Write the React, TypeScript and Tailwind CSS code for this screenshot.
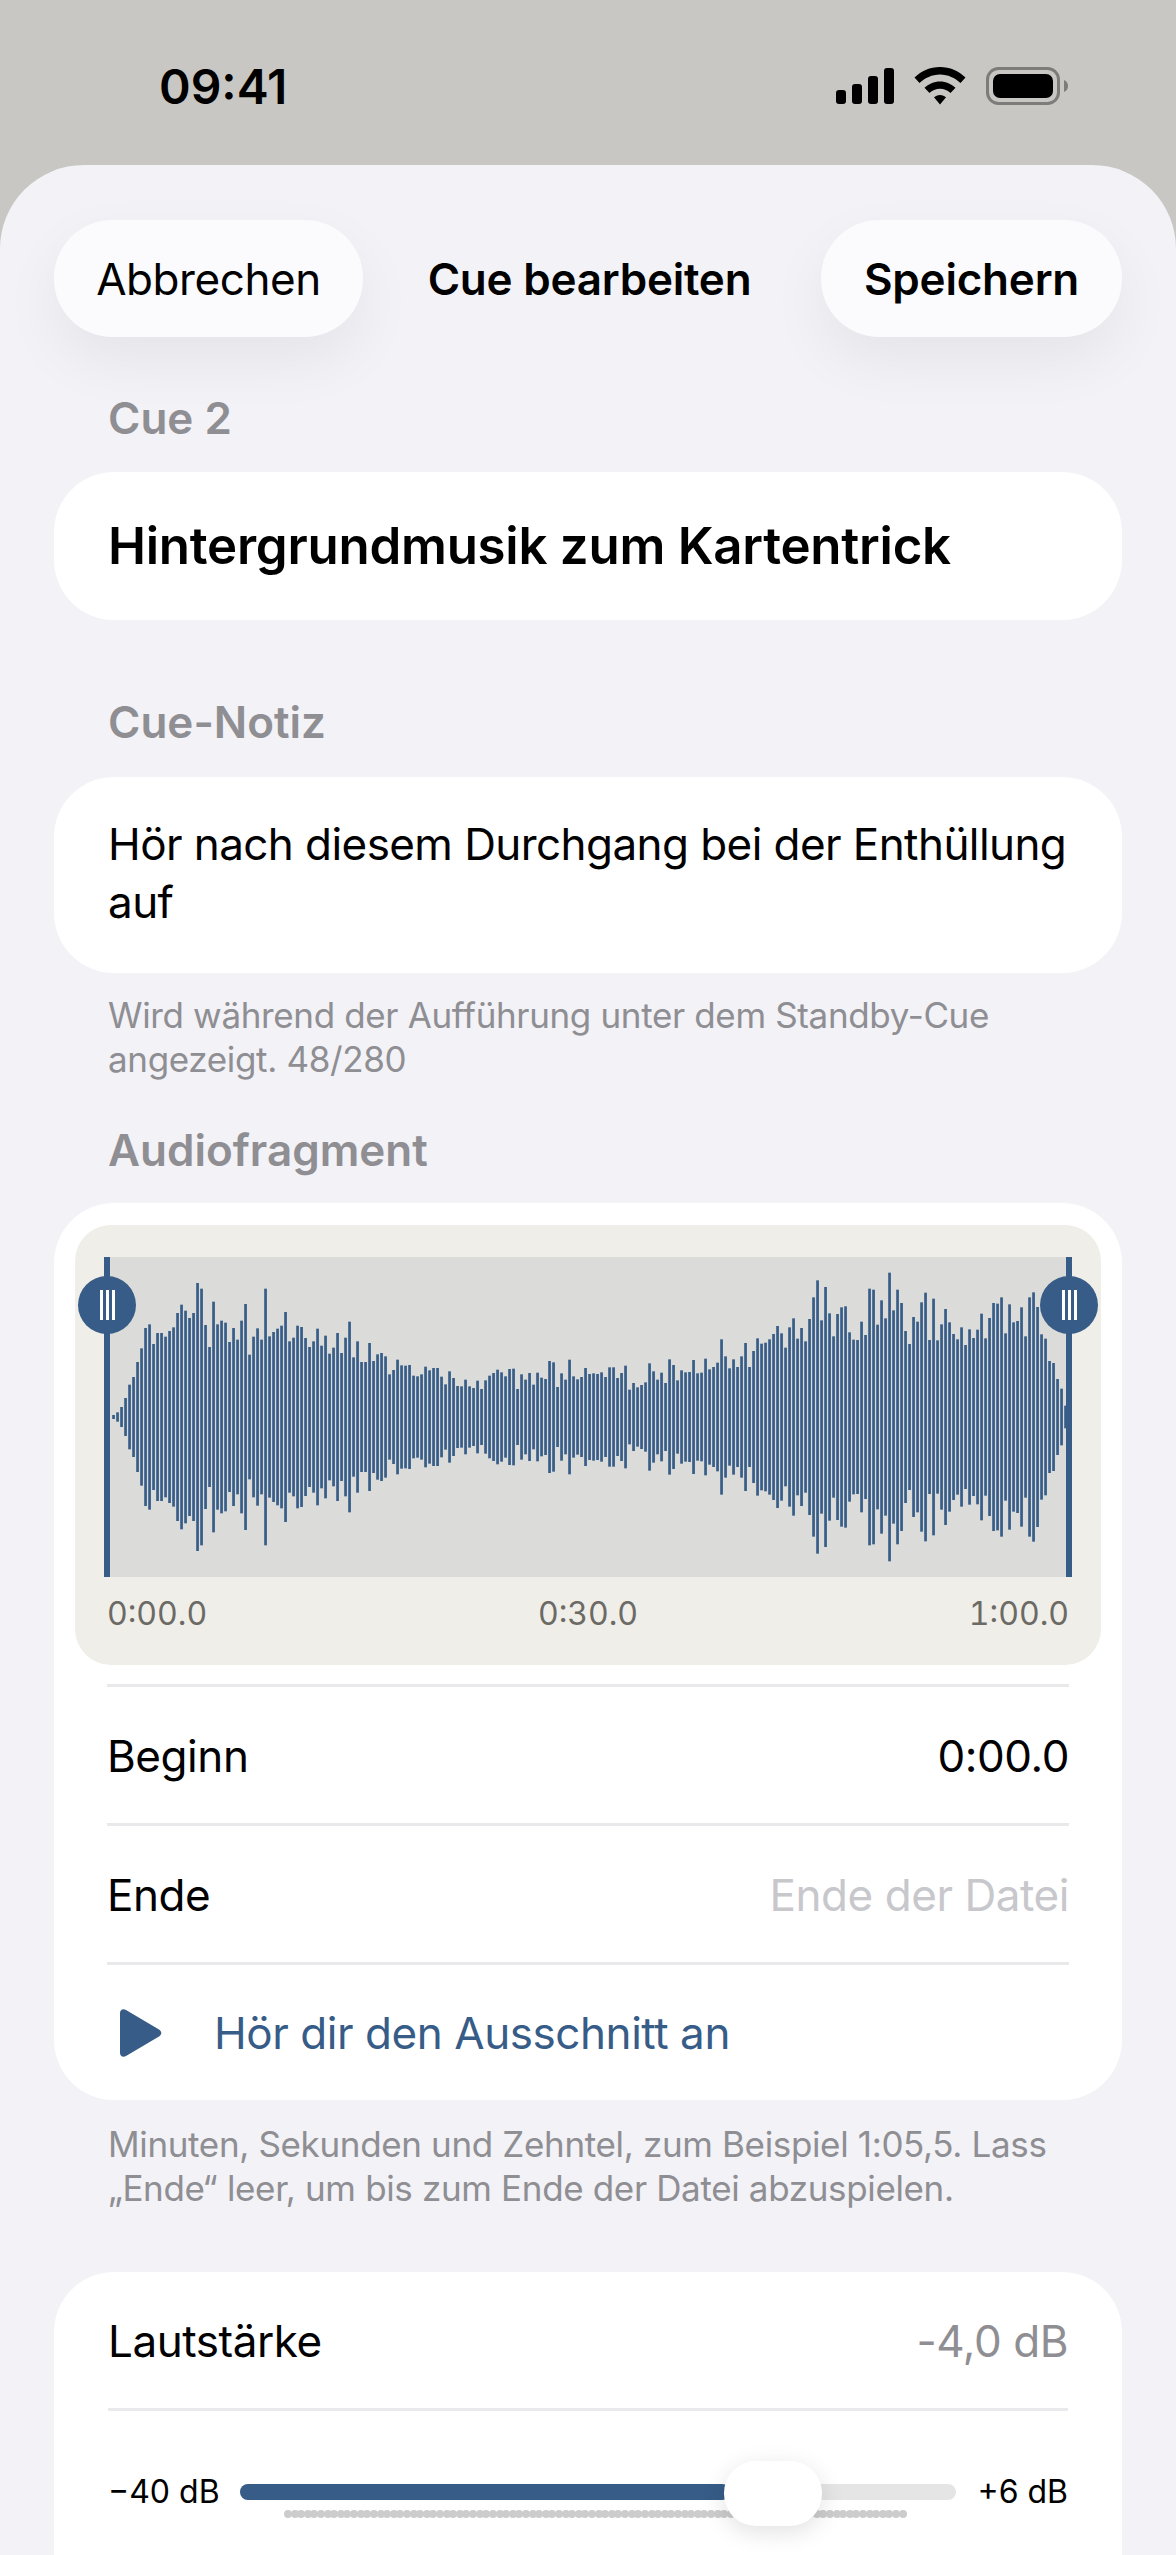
const FONT = "font-['Inter','Noto_Sans',sans-serif]";

// top of each bar in the 3x crop, centre line at 682
const LEFT_TOPS = [676,668,652,625,585,562,517,476,415,404,463,430,430,441,424,413,370,345,363,385,370,280,297,406,472,336,404,393,399,457,415,450,393,343,495,441,416,450,297,440,427,417,408,367,455,444,408,412,445,472,455,417,468,438,492,474,430,490,444,396,503,455,517,517,460,514,494,490,500,554,541,510,527,528,526,558,560,554,531,542,535,535,561,584,545,565,589,590,570,590,595,573,598,572,558,550,540,548,560,538,537,598,554,570,550,585,549,564,568,514,518,592,551,570,510,560,569,562,535,553,551,553];
const RIGHT_TOPS = [548,562,533,533,565,550,528,600,580,593,586,578,521,545,570,549,580,509,526,572,542,548,547,511,551,549,507,539,532,519,449,500,536,509,532,500,460,532,484,446,462,459,449,433,409,431,474,413,386,447,415,455,388,323,272,392,292,371,440,373,353,350,428,450,451,396,436,297,300,405,332,386,249,362,300,340,424,463,382,396,338,309,451,327,452,404,358,398,433,449,413,466,419,445,420,372,446,385,340,342,323,431,344,398,394,353,440,323,308,352,434,447,514,520,568,597,648];
const TOPS = [...LEFT_TOPS, ...RIGHT_TOPS];
const DOTS = Array.from({ length: 94 }, (_, i) => i);

function StatusIcons() {
  return (
    <div className="flex items-center gap-[20px]">
      <svg width="58" height="36" viewBox="0 0 58 36" fill="#000">
        <rect x="0" y="22" width="10" height="14" rx="3" />
        <rect x="16" y="16" width="10" height="20" rx="3" />
        <rect x="32" y="8" width="10" height="28" rx="3" />
        <rect x="48" y="0" width="10" height="36" rx="3" />
      </svg>
      <svg width="52" height="38" viewBox="0 0 52 38" fill="#000">
        <path d="M26 0C16 0 7.500 4 0.500 10.500L5.500 16C11 11 18 7.500 26 7.500C34 7.500 41 11 46.500 16L51.500 10.500C44.500 4 36 0 26 0Z" />
        <path d="M26 14.500C20 14.500 14.500 17 10.500 20.800L15.500 26C18 23.500 22 21.800 26 21.800C30 21.800 34 23.500 36.500 26L41.500 20.800C37.500 17 32 14.500 26 14.500Z" />
        <path d="M26 28C23.500 28 21.500 29 20 30.300L26 37.500L32 30.300C30.500 29 28.500 28 26 28Z" />
      </svg>
      <svg width="82" height="38" viewBox="0 0 82 38">
        <rect x="1.500" y="1.500" width="71" height="35" rx="11" fill="none" stroke="#7d7c7a" strokeWidth="3" />
        <rect x="7" y="7" width="60" height="24" rx="7" fill="#000" />
        <path d="M78 13C80.500 14 82 16 82 19C82 22 80.500 24 78 25Z" fill="#7d7c7a" />
      </svg>
    </div>
  );
}

function Waveform() {
  return (
    <svg className="absolute left-0 top-0 h-full w-full" viewBox="0 0 968 320">
      {TOPS.map((top, i) => {
        const half = (682 - top) / 3;
        return <rect key={i} x={8.2 + i * 4} y={160 - half} width="2.7" height={half * 2} fill="#365c87" />;
      })}
    </svg>
  );
}

function Handle({ side }: { side: "left" | "right" }) {
  return (
    <div className={`absolute top-0 bottom-0 w-[6px] bg-[#365c87] ${side === "left" ? "left-0" : "right-0"}`}>
      <div className="absolute left-1/2 top-[19px] flex h-[58px] w-[58px] -translate-x-1/2 items-center justify-center gap-[3px] rounded-full bg-[#365c87]">
        <span className="h-[30px] w-[3px] bg-white" />
        <span className="h-[30px] w-[3px] bg-white" />
        <span className="h-[30px] w-[3px] bg-white" />
      </div>
    </div>
  );
}

function SectionLabel({ children, className = "" }: { children: string; className?: string }) {
  return <div className={`pl-[54px] text-[44px] leading-[56px] font-semibold text-[#8e8e93] ${className}`}>{children}</div>;
}

function Divider() {
  return <div className="h-[3px] bg-[#e9e9eb]" />;
}

export default function App() {
  return (
    <div className={`${FONT} h-[2555px] w-[1176px] overflow-hidden bg-[#c8c7c3] text-black`}>
      <div className="flex h-[165px] items-start justify-between pl-[159px] pr-[108px] pt-[58px]">
        <span className="text-[48px] leading-[58px] font-semibold">09:41</span>
        <div className="pt-[9px]">
          <StatusIcons />
        </div>
      </div>

      <div className="h-[2390px] rounded-t-[84px] bg-[#f2f2f7] px-[54px] pt-[55px]">
        <div className="flex h-[117px] items-center justify-between">
          <button className="h-full w-[309px] rounded-[58px] bg-[#fbfbfe] text-[44px] tracking-[-0.01em] shadow-[0_24px_60px_rgba(0,0,0,0.06)]">Abbrechen</button>
          <span className="mr-[5px] text-[44px] font-semibold tracking-[-0.005em]">Cue bearbeiten</span>
          <button className="h-full w-[301px] rounded-[58px] bg-[#fbfbfe] text-[44px] font-semibold tracking-[-0.005em] shadow-[0_24px_60px_rgba(0,0,0,0.06)]">Speichern</button>
        </div>

        <SectionLabel className="mt-[53px]">Cue 2</SectionLabel>
        <div className="mt-[26px] flex h-[148px] items-center rounded-[60px] bg-white px-[54px] text-[51px] font-semibold tracking-[-0.005em]">
          Hintergrundmusik zum Kartentrick
        </div>

        <SectionLabel className="mt-[74px]">Cue-Notiz</SectionLabel>
        <div className="mt-[27px] h-[196px] rounded-[60px] bg-white pl-[54px] pr-[48px] pt-[38px] text-[44px] leading-[58px] tracking-[-0.013em]">
          Hör nach diesem Durchgang bei der Enthüllung auf
        </div>
        <p className="mt-[20px] px-[54px] text-[35px] leading-[44px] tracking-[-0.01em] text-[#8e8e93]">
          Wird während der Aufführung unter dem Standby-Cue angezeigt. 48/280
        </p>

        <SectionLabel className="mt-[41px]">Audiofragment</SectionLabel>
        <div className="mt-[25px] h-[897px] rounded-[60px] bg-white px-[21px] pt-[22px]">
          <div className="h-[440px] rounded-[36px] bg-[#f0eee8] px-[29px] pt-[32px]">
            <div className="relative h-[320px] bg-[#dbdcd9]">
              <Waveform />
              <Handle side="left" />
              <Handle side="right" />
            </div>
            <div className="mt-[17px] flex justify-between px-[3px] text-[32px] leading-[40px] tabular-nums text-[#6b6a65]">
              <span>0:00.0</span>
              <span>0:30.0</span>
              <span>1:00.0</span>
            </div>
          </div>

          <div className="mx-[32px] mt-[19px]">
            <Divider />
            <div className="flex h-[136px] items-center justify-between pt-[2px] text-[44px] tracking-[-0.01em]">
              <span>Beginn</span>
              <span>0:00.0</span>
            </div>
            <Divider />
            <div className="flex h-[136px] items-center justify-between pt-[2px] text-[44px] tracking-[-0.01em]">
              <span>Ende</span>
              <span className="text-[#c7c7cc]">Ende der Datei</span>
            </div>
            <Divider />
            <div className="flex h-[136px] items-center text-[44px] tracking-[-0.01em] text-[#365c87]">
              <svg className="ml-[13px]" width="42" height="48" viewBox="0 0 42 48" fill="#365c87">
                <path d="M0 4C0 1 3 -1 6 1L39 20.500C42 22.500 42 25.500 39 27.500L6 47C3 49 0 47 0 44Z" />
              </svg>
              <span className="ml-[52px]">Hör dir den Ausschnitt an</span>
            </div>
          </div>
        </div>
        <p className="mt-[22px] px-[54px] text-[35px] leading-[44px] tracking-[-0.01em] text-[#8e8e93]">
          Minuten, Sekunden und Zehntel, zum Beispiel 1:05,5. Lass „Ende“ leer, um bis zum Ende der Datei abzuspielen.
        </p>

        <div className="mt-[62px] h-[400px] rounded-[60px] bg-white px-[54px]">
          <div className="flex h-[136px] items-center justify-between pt-[2px] text-[44px] tracking-[-0.01em]">
            <span>Lautstärke</span>
            <span className="text-[#8e8e93]">-4,0 dB</span>
          </div>
          <Divider />
          <div className="mt-[57px] flex items-center text-[32px]">
            <span className="w-[132px] shrink-0">−40 dB</span>
            <div className="relative h-[16px] w-[716px] rounded-full bg-[#e5e5e5]">
              <div className="h-full w-[490px] rounded-full bg-[#365c87]" />
              <div className="absolute left-[44px] top-[26px] flex w-[625px]">
                {DOTS.map((dot) => (
                  <span key={dot} className="mr-[-1.4px] h-[8px] w-[8px] shrink-0 rounded-full bg-[#cccccc]" />
                ))}
              </div>
              <div className="absolute left-[484px] top-[-23px] h-[65px] w-[98px] rounded-[32px] bg-white shadow-[0_6px_24px_rgba(0,0,0,0.12)]" />
            </div>
            <span className="ml-auto">+6 dB</span>
          </div>
        </div>
      </div>
    </div>
  );
}
